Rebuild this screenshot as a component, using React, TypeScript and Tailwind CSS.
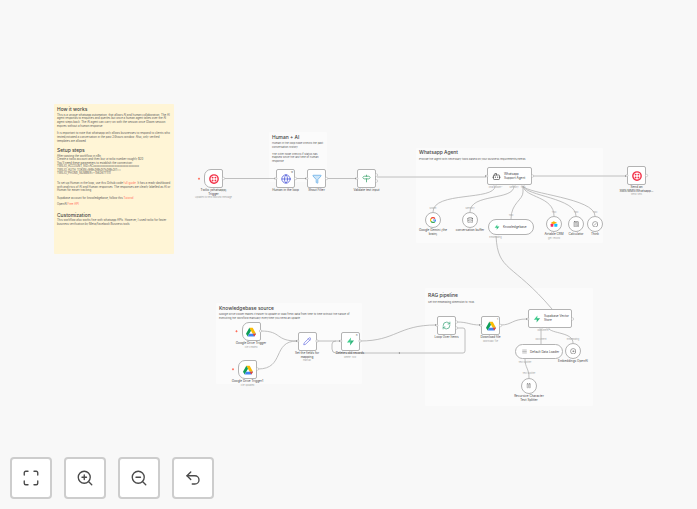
import React from "react";
import { Maximize, ZoomIn, ZoomOut, Undo2, Globe, Filter, Bot, Database, Calculator, RefreshCw, Pencil, Signpost, AlignJustify, CircleSlash, Pause, Disc } from "lucide-react";

const Twilio = ({ s = 10 }: { s?: number }) => (
  <svg width={s} height={s} viewBox="0 0 24 24" fill="none">
    <circle cx="12" cy="12" r="10" stroke="#f22f46" strokeWidth="3.400" />
    <circle cx="8.600" cy="8.600" r="2.300" fill="#f22f46" />
    <circle cx="15.400" cy="8.600" r="2.300" fill="#f22f46" />
    <circle cx="8.600" cy="15.400" r="2.300" fill="#f22f46" />
    <circle cx="15.400" cy="15.400" r="2.300" fill="#f22f46" />
  </svg>
);
const Drive = ({ s = 10 }: { s?: number }) => (
  <svg width={s} height={s} viewBox="0 0 24 22">
    <path d="M8 1h8l8 14h-8z" fill="#fbbc04" />
    <path d="M8 1 0 15l4 7 8-14z" fill="#0f9d58" />
    <path d="M4 22h16l4-7H8z" fill="#4285f4" />
    <path d="M16 15l4 7 4-7z" fill="#ea4335" />
  </svg>
);
const Supa = ({ s = 9 }: { s?: number }) => (
  <svg width={s} height={s} viewBox="0 0 24 24">
    <path d="M13.500 1.500 2.500 14.500h9.500z" fill="#3ecf8e" />
    <path d="M10.500 22.500 21.500 9.500h-9.500z" fill="#2fb67b" />
  </svg>
);
const GoogleG = ({ s = 6 }: { s?: number }) => (
  <svg width={s} height={s} viewBox="0 0 24 24" fill="none" strokeWidth="4.500">
    <path d="M20 6.200A10 10 0 0 0 4 6.500" stroke="#ea4335" />
    <path d="M4 6.500a10 10 0 0 0 0 11" stroke="#fbbc05" />
    <path d="M4 17.500a10 10 0 0 0 15 1.500" stroke="#34a853" />
    <path d="M19 19a10 10 0 0 0 3-7H12" stroke="#4285f4" />
  </svg>
);
const Airtable = ({ s = 8 }: { s?: number }) => (
  <svg width={s} height={s} viewBox="0 0 24 24">
    <path d="M2 9l9-5 10 4-10 5z" fill="#fcb400" />
    <rect x="13" y="11" width="9" height="9" rx="1.500" fill="#18bfff" />
    <rect x="2" y="11" width="8" height="9" rx="1.500" fill="#f82b60" />
  </svg>
);

function Node({ pos, box, label, sub, extra, children }: { pos: string; box: string; label?: React.ReactNode; sub?: string; extra?: string; children?: React.ReactNode }) {
  return (
    <div className={`absolute flex flex-col items-center text-center ${pos}`}>
      <div className={`relative shrink-0 flex items-center bg-white border border-[#b3b3b3] ${box}`}>
        {children}
        {extra ? <span className="absolute top-[0.500px] right-[1px] text-[2.600px] leading-[3px] text-[#555]">{extra}</span> : null}
      </div>
      {label ? <div className="mt-[1px] text-[3.100px] leading-[3.700px] text-[#444]">{label}</div> : null}
      {sub ? <div className="text-[2.300px] leading-[3px] text-[#a3a3a3]">{sub}</div> : null}
    </div>
  );
}

function Tiny({ className, children }: { className: string; children: React.ReactNode }) {
  return <div className={`absolute text-center text-[2.300px] leading-[3px] text-[#a3a3a3] ${className}`}>{children}</div>;
}

function Note({ className, title, children }: { className: string; title: string; children?: React.ReactNode }) {
  return (
    <div className={`absolute rounded-[1px] bg-[#fbfbfb] text-[#5a5a5a] ${className}`}>
      <div className="text-[4.900px] leading-[7px] font-medium text-[#444]">{title}</div>
      {children}
    </div>
  );
}

const sq = "w-[19px] h-[19px] rounded-[2px] justify-center";
const trig = "w-[19px] h-[19px] rounded-l-[7px] rounded-r-[2px] justify-center";
const circ = "w-[16px] h-[16px] rounded-full justify-center";

export default function App() {
  return (
    <div className="relative w-[697px] h-[509px] overflow-hidden bg-[#f8f8f8] bg-[radial-gradient(#f1f1f1_0.600px,transparent_0.600px)] bg-[length:4px_4px] font-['Inter',sans-serif]">
      {/* Sticky notes */}
      <div className="absolute left-[54px] top-[104px] w-[120px] h-[150px] rounded-[1px] bg-[#fff5d6] px-[3px] pt-[2px] text-[2.800px] leading-[3.800px] text-[#5a5a5a]">
        <div className="text-[4.900px] leading-[6px] font-medium text-[#444]">How it works</div>
        <p className="mt-[1.500px]">This is a unique whatsapp automation, that allows AI and human collaboration. The AI agent responds to enquiries and queries but once a human agent takes over the AI agent steps back. The AI agent can carry on with the session once Gloom session expires without a human response.</p>
        <p className="mt-[3.500px]">It is important to note that whatsapp only allows businesses to respond to clients who texted/initiated a conversation in the past 24hours window. Also, only verified templates are allowed.</p>
        <div className="mt-[3.500px] text-[4.900px] leading-[6px] font-medium text-[#444]">Setup steps</div>
        <p className="mt-[1.500px] leading-[3.550px]">After pasting the workflow in n8n<br />Create a twilio account and then buy a twilio number roughly $20<br />You'll need these parameters to establish the connection:<br />TWILIO_ACCOUNT_SID=ACxxxxxxxxxxxxxxxxxxxxxxxxxxxxxx<br />TWILIO_AUTH_TOKEN=9f8h3f8h3f7h3f8h3f7==<br />TWILIO_PHONE_NUMBER=+15626771111</p>
        <p className="mt-[6px]">To set up Human in the loop, use this Github code <span className="text-[#ff6d5a]">full guide</span>. It has a ready dashboard with analytics of AI and Human responses. The responses are clearly labelled as AI or Human for easier tracking.</p>
        <p className="mt-[3.500px]">Supabase account for knowledgebase, follow this <span className="text-[#ff6d5a]">Tutorial</span></p>
        <p className="mt-[2.500px]">OpenAI <span className="text-[#ff6d5a]">Free API</span></p>
        <div className="mt-[5px] text-[4.900px] leading-[6px] font-medium text-[#444]">Customization</div>
        <p className="mt-[1.500px]">This workflow also works fine with whatsapp APIs. However, I used twilio for faster business verification by Meta/Facebook Business tools</p>
      </div>

      <Note className="left-[269px] top-[132px] w-[58px] h-[50px] px-[3px] pt-[1.500px] text-[2.700px] leading-[3.500px]" title="Human + AI">
        <p className="mt-[1.500px]">Human in the loop node checks the past conversation history</p>
        <p className="mt-[3.500px]">The Filter node checks if Status has elapsed since the last time of human response</p>
      </Note>
      <Note className="left-[416px] top-[148px] w-[187px] h-[95px] px-[3px] pt-[1px] text-[2.700px] leading-[3.500px]" title="Whatsapp Agent">
        <p className="mt-[1.500px]">Provide the agent with necessary tools based on your business requirements/needs</p>
      </Note>
      <Note className="left-[216px] top-[303px] w-[146px] h-[81px] px-[3px] pt-[1.500px] text-[2.700px] leading-[3.800px]" title="Knowledgebase source">
        <p className="mt-[1.500px]">Google Drive Folder makes it easier to update or load fresh data from time to time without the hassle of executing the workflow manually everytime you need an update</p>
      </Note>
      <Note className="left-[425px] top-[288px] w-[168px] h-[118px] px-[3px] pt-[4px] text-[2.600px] leading-[3.500px]" title="RAG pipeline">
        <p className="mt-[1.500px]">Set the embedding dimension to 1536</p>
      </Note>

      {/* Connections */}
      <svg className="absolute left-0 top-0" width="697" height="509" viewBox="0 0 697 509" fill="none" stroke="#b0b0b0" strokeWidth="0.800">
        <path d="M224 178.500H275M296 178.500H306M327 178.500H356M377 177H486M533 176H626" />
        <path d="M495 186C495 201 433 191 433 212M514 186C514 201 470 193 470 212" />
        <path d="M523 186V192C523 200 511 203 511 219M523 186C525 198 554 196 554 216M523 186C526 196 576 198 576 216M523 186C527 194 595 198 595 216" />
        <path d="M496 236C498 272 512 262 552 309" />
        <path d="M261 331C282 331 275 341 297 341M258 369C285 369 272 341 297 341M317 341H340M360 341C396 341 398 325 436 325" />
        <path d="M457 322C468 322 470 325 480 325M457 328H463Q465 328 465 330V351Q465 353 463 353H336Q332 353 332 349V344Q332 341 336 341" />
        <path d="M501 325C512 325 512 319 527 319M541 328V344M548 328C552 334 573 332 573 343M525 359C525 368 529 368 529 378" />
      </svg>

      {/* Start markers and arrow heads */}
      <svg className="absolute left-0 top-0" width="697" height="509" viewBox="0 0 697 509" fill="#ff6d5a">
        <path d="M199 177.500l1.200 1.200-1.200 1.200-1.200-1.200zM236.500 330l1.200 1.200-1.200 1.200-1.200-1.200zM233 368l1.200 1.200-1.200 1.200-1.200-1.200z" />
        <path d="M400 352l-1.500 1 1.500 1zM274.500 177.500l1.500 1-1.500 1zM305 177.500l1.500 1-1.500 1zM355 177.500l1.500 1-1.500 1zM485 175l1.500 1-1.500 1zM625 175l1.500 1-1.500 1zM296 340l1.500 1-1.500 1zM339 340l1.500 1-1.500 1zM435 324l1.500 1-1.500 1zM479 324l1.500 1-1.500 1zM526 318l1.500 1-1.500 1z" fill="#888" />
      </svg>

      {/* Top flow */}
      <Node pos="left-[193px] top-[169px] w-[41px]" box={trig} label={<>Twilio (whatsapp)<br />Trigger</>} sub="Updates to new inbound message"><Twilio /></Node>
      <Node pos="left-[265px] top-[169px] w-[41px]" box={sq} label="Human in the loop" extra="w"><Globe size={10} strokeWidth={1.800} color="#4a56d8" /></Node>
      <Node pos="left-[296px] top-[169px] w-[41px]" box={sq} label="Shout Filter"><Filter size={10} strokeWidth={1.700} color="#5aa9e6" fill="#cfe6f8" /></Node>
      <Node pos="left-[346px] top-[169px] w-[41px]" box={sq} label="Validate text input"><Signpost size={9} strokeWidth={2} color="#38a169" /></Node>

      {/* Agent */}
      <Node pos="left-[487px] top-[167px] w-[45px]" box="w-[45px] h-[18px] rounded-[2px] gap-[3px] pl-[4px]">
        <Bot size={9} strokeWidth={1.800} color="#444" />
        <span className="text-left text-[3.100px] leading-[4.200px] text-[#444]">Whatsapp<br />Support Agent</span>
      </Node>
      <Tiny className="left-[487px] top-[186px] w-[17px]">Chat Model*</Tiny>
      <Tiny className="left-[508px] top-[186px] w-[12px]">Memory</Tiny>
      <Tiny className="left-[520px] top-[186px] w-[6px]">Tool</Tiny>
      <Tiny className="left-[426px] top-[207px] w-[14px]">Model</Tiny>
      <Tiny className="left-[463px] top-[207px] w-[14px]">Memory</Tiny>
      <Tiny className="left-[506px] top-[214px] w-[10px]">Tool</Tiny>
      <Tiny className="left-[549px] top-[211px] w-[10px]">Tool</Tiny>
      <Tiny className="left-[571px] top-[211px] w-[10px]">Tool</Tiny>
      <Tiny className="left-[590px] top-[211px] w-[10px]">Tool</Tiny>

      <Node pos="left-[616px] top-[166px] w-[41px]" box={sq} label={<>Send an<br />SMS/MMS/Whatsapp...</>} sub="send: sms"><Twilio /></Node>

      <Node pos="left-[415px] top-[212px] w-[36px]" box={circ} label={<>Google Gemini (the<br />brain)</>}><GoogleG /></Node>
      <Node pos="left-[452px] top-[212px] w-[36px]" box={circ} label="conversation buffer"><Database size={6.500} strokeWidth={1.800} color="#555" /></Node>
      <Node pos="left-[488px] top-[219px] w-[46px]" box="w-[46px] h-[16px] rounded-full gap-[3px] pl-[5px]">
        <Supa s={6} />
        <span className="text-[3.100px] leading-[4px] text-[#444]">Knowledgebase</span>
      </Node>
      <Tiny className="left-[488px] top-[236px] w-[15px]">Embedding</Tiny>
      <Node pos="left-[541px] top-[216px] w-[26px]" box={circ} label="Airtable CRM" sub="get: record"><Airtable /></Node>
      <Node pos="left-[564px] top-[216px] w-[24px]" box={circ} label="Calculator"><Calculator size={6.500} strokeWidth={1.800} color="#555" /></Node>
      <Node pos="left-[585px] top-[216px] w-[20px]" box={circ} label="Think"><CircleSlash size={6.500} strokeWidth={1.800} color="#555" /></Node>

      {/* Knowledgebase flow */}
      <Node pos="left-[231px] top-[322px] w-[40px]" box={trig} label="Google Drive Trigger" sub="File created"><Drive /></Node>
      <Node pos="left-[227px] top-[360px] w-[41px]" box={trig} label="Google Drive Trigger1" sub="File updated"><Drive /></Node>
      <Node pos="left-[291px] top-[332px] w-[32px]" box={sq} label={<>Set the fields for<br />mapping</>} sub="manual"><Pencil size={8.500} strokeWidth={1.800} color="#5a63e0" /></Node>
      <Node pos="left-[330px] top-[332px] w-[40px]" box={sq} label="Deletes old records" sub="delete: row" extra="n"><Supa /></Node>

      {/* RAG flow */}
      <Node pos="left-[426px] top-[316px] w-[41px]" box={sq} label="Loop Over Items"><RefreshCw size={9} strokeWidth={1.800} color="#2f9e72" /></Node>
      <Node pos="left-[470px] top-[316px] w-[41px]" box={sq} label="Download file" sub="download: file" extra="1"><Drive /></Node>
      <Node pos="left-[528px] top-[309px] w-[44px]" box="w-[44px] h-[19px] rounded-[2px] gap-[3px] pl-[4px]">
        <Supa s={8} />
        <span className="text-left text-[3.100px] leading-[3.800px] text-[#444]">Supabase Vector<br />Store</span>
      </Node>
      <Tiny className="left-[530px] top-[329px] w-[26px]">Document</Tiny>
      <Tiny className="left-[533px] top-[338px] w-[16px]">Document</Tiny>
      <Tiny className="left-[565px] top-[338px] w-[16px]">Embedding</Tiny>
      <Node pos="left-[515px] top-[344px] w-[48px]" box="w-[48px] h-[15px] rounded-full gap-[3px] pl-[6px]">
        <AlignJustify size={5} strokeWidth={1.800} color="#555" />
        <span className="text-[3.100px] leading-[4px] text-[#444] whitespace-nowrap">Default Data Loader</span>
      </Node>
      <Tiny className="left-[517px] top-[361px] w-[16px]">Text Splitter</Tiny>
      <Tiny className="left-[521px] top-[372px] w-[16px]">Text Splitter</Tiny>
      <Node pos="left-[555px] top-[343px] w-[36px]" box={circ} label="Embeddings OpenAI"><Disc size={6.500} strokeWidth={2.400} color="#777" /></Node>
      <Node pos="left-[511px] top-[378px] w-[36px]" box={circ} label={<>Recursive Character<br />Text Splitter</>}><Pause size={5.500} strokeWidth={1.600} color="#555" /></Node>

      {/* Ports */}
      <svg className="absolute left-0 top-0" width="697" height="509" viewBox="0 0 697 509" fill="#fff" stroke="#a8a8a8" strokeWidth="0.500">
        <circle cx="223.500" cy="178.500" r="1.200" /><circle cx="276" cy="178.500" r="1" /><circle cx="295.500" cy="178.500" r="1.200" />
        <circle cx="307" cy="178.500" r="1" /><circle cx="326.500" cy="178.500" r="1.200" /><circle cx="357" cy="178.500" r="1" />
        <circle cx="376.500" cy="175" r="1.200" /><circle cx="376.500" cy="181" r="1.200" /><circle cx="487" cy="176" r="1" /><circle cx="532.500" cy="176" r="1.200" />
        <circle cx="627" cy="175.500" r="1" /><circle cx="646.500" cy="175.500" r="1.200" /><circle cx="260.500" cy="331" r="1.200" /><circle cx="257.500" cy="369" r="1.200" />
        <circle cx="298" cy="341" r="1" /><circle cx="317" cy="341" r="1.200" /><circle cx="341" cy="341" r="1" /><circle cx="360" cy="341" r="1.200" />
        <circle cx="437" cy="325.500" r="1" /><circle cx="456.500" cy="322" r="1.200" /><circle cx="456.500" cy="328" r="1.200" /><circle cx="481" cy="325.500" r="1" /><circle cx="500.500" cy="325.500" r="1.200" />
        <circle cx="528" cy="319" r="1" /><circle cx="572.500" cy="319" r="1.200" />
        <path d="M495 184.500l1 1-1 1-1-1zM514 184.500l1 1-1 1-1-1zM523 184.500l1 1-1 1-1-1zM541 327.500l1 1-1 1-1-1zM548 327.500l1 1-1 1-1-1z" />
      </svg>

      {/* Canvas controls */}
      <div className="absolute left-[10px] top-[457px] flex gap-[12px]">
        {[Maximize, ZoomIn, ZoomOut, Undo2].map((I, i) => (
          <button key={i} className="w-[42px] h-[42px] flex items-center justify-center rounded-[4px] bg-white border-2 border-[#cdcdcd]">
            <I size={18} strokeWidth={1.800} color="#4a4a4a" />
          </button>
        ))}
      </div>
    </div>
  );
}
